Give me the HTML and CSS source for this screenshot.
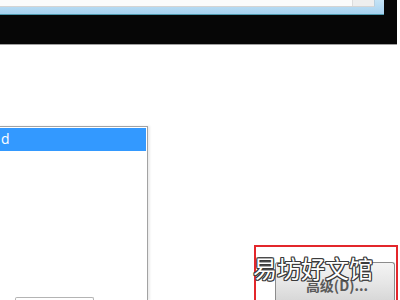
FILE: index.html
```html
<!DOCTYPE html>
<html lang="zh">
<head>
<meta charset="utf-8">
<link rel="stylesheet" href="styles.css">
</head>
<body>
<div class="frame">
  <div class="win">
    <div class="client"><div class="sb"></div></div>
  </div>
</div>
<div class="main">
  <div class="listbox">
    <div class="sel">d</div>
    <div class="smallbtn"></div>
  </div>
  <div class="redbox">
    <div class="btn">高级(D)...</div>
  </div>
</div>
<div class="watermark">易坊好文馆</div>
</body>
</html>
```
FILE: styles.css
```css
html, body {
  margin: 0;
  padding: 0;
  width: 400px;
  height: 300px;
  overflow: hidden;
  background: #ffffff;
  font-family: "Noto Sans CJK SC", "Noto Sans", sans-serif;
}
.frame {
  width: 397px;
  height: 44px;
  background: #060606;
  border-bottom: 1px solid #a0a0a0;
}
.win {
  width: 384px;
  height: 15px;
  box-sizing: border-box;
  background: linear-gradient(#c4e3f6, #a7d1ef);
  border-bottom: 1px solid #4d98ad;
}
.client {
  width: 375px;
  height: 7px;
  box-sizing: border-box;
  background: #fbfbfb;
  border-bottom: 1px solid #d4d4d4;
  border-right: 1px solid #b7cfe0;
  display: flex;
  justify-content: flex-end;
}
.sb {
  width: 21px;
  height: 6px;
  background: #eeeeee;
  border-left: 1px solid #dddddd;
}
.main {
  display: flex;
  align-items: flex-start;
  margin-top: 81px;
}
.listbox {
  margin-left: -2px;
  width: 150px;
  height: 174px;
  box-sizing: border-box;
  border: 1px solid #a3a3a3;
  border-bottom: none;
  padding: 1px;
  box-shadow: 2px 0 2px #ececec;
  flex: none;
}
.sel {
  height: 23px;
  background: #3399ff;
  color: #ffffff;
  font-family: "Open Sans", "Noto Sans", sans-serif;
  font-size: 14px;
  line-height: 22px;
  padding-left: 1px;
}
.smallbtn {
  margin-top: 146px;
  margin-left: 15px;
  width: 77px;
  height: 3px;
  border: 1px solid #b4b4b4;
  border-bottom: none;
  border-radius: 2px 2px 0 0;
}
.redbox {
  margin-top: 119px;
  margin-left: 106px;
  width: 144px;
  height: 55px;
  box-sizing: border-box;
  border: 2px solid #e3262b;
  border-bottom: none;
  flex: none;
}
.btn {
  margin-top: 15px;
  margin-left: 19px;
  width: 120px;
  height: 38px;
  box-sizing: border-box;
  border: 1px solid #8c8c8c;
  border-bottom: none;
  border-radius: 3px 3px 0 0;
  background: linear-gradient(#f4f4f4, #e6e6e6 55%, #d8d8d8);
  color: #5a5a5a;
  font-size: 14px;
  font-weight: bold;
  text-align: center;
  padding-top: 14px;
  padding-left: 4px;
  line-height: 16px;
}
.watermark {
  position: absolute;
  left: 253px;
  top: 252px;
  font-size: 24px;
  line-height: 32px;
  color: #ffffff;
  font-family: "Noto Sans CJK SC", sans-serif;
  text-shadow: 1px 0 0 #3a3a3a, -1px 0 0 #3a3a3a, 0 1px 0 #3a3a3a, 0 -1px 0 #3a3a3a,
    1px 1px 0 #3a3a3a, -1px -1px 0 #3a3a3a, 1px -1px 0 #3a3a3a, -1px 1px 0 #3a3a3a;
}
```
